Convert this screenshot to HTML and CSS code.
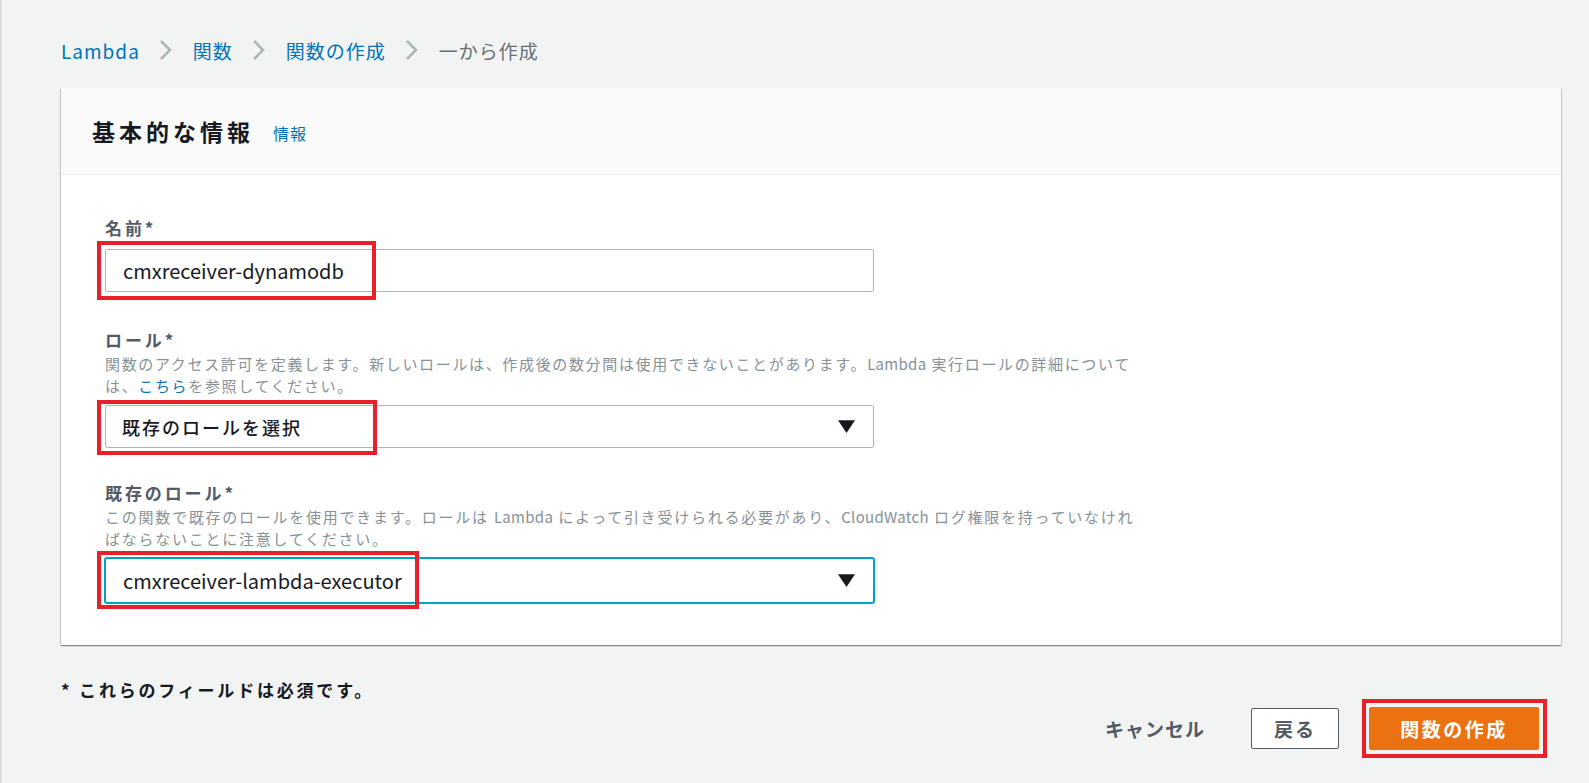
FILE: index.html
```html
<!DOCTYPE html>
<html lang="ja">
<head>
<meta charset="utf-8">
<title>関数の作成</title>
<link rel="stylesheet" href="styles.css">
</head>
<body>
<div class="page">
  <nav class="crumbs">
    <a class="crumb">Lambda</a>
    <svg class="chev" viewBox="0 0 14 22"><polyline points="2,2 11,11 2,20"/></svg>
    <a class="crumb">関数</a>
    <svg class="chev" viewBox="0 0 14 22"><polyline points="2,2 11,11 2,20"/></svg>
    <a class="crumb">関数の作成</a>
    <svg class="chev" viewBox="0 0 14 22"><polyline points="2,2 11,11 2,20"/></svg>
    <span class="crumb current">一から作成</span>
  </nav>

  <section class="card">
    <header class="card-head">
      <h2 class="card-title">基本的な情報</h2>
      <a class="info">情報</a>
    </header>
    <div class="card-body">
      <div class="field">
        <div class="label">名前*</div>
        <div class="control">
          <div class="input"><span class="val">cmxreceiver-dynamodb</span></div>
          <span class="mark mark-name"></span>
        </div>
      </div>

      <div class="field second">
        <div class="label">ロール*</div>
        <p class="desc">関数のアクセス許可を定義します。新しいロールは、作成後の数分間は使用できないことがあります。<span class="en">Lambda</span> 実行ロールの詳細について<br>は、<a class="link">こちら</a>を参照してください。</p>
        <div class="control">
          <div class="input select">
            <span class="val-ja">既存のロールを選択</span>
            <svg class="caret" viewBox="0 0 16 12"><polygon points="0,0 16,0 8,12"/></svg>
          </div>
          <span class="mark mark-role"></span>
        </div>
      </div>

      <div class="field last">
        <div class="label">既存のロール*</div>
        <p class="desc wide">この関数で既存のロールを使用できます。ロールは <span class="en">Lambda</span> によって引き受けられる必要があり、<span class="en">CloudWatch</span> ログ権限を持っていなけれ<br>ばならないことに注意してください。</p>
        <div class="control">
          <div class="input select focus">
            <span class="val">cmxreceiver-lambda-executor</span>
            <svg class="caret" viewBox="0 0 16 12"><polygon points="0,0 16,0 8,12"/></svg>
          </div>
          <span class="mark mark-exist"></span>
        </div>
      </div>
    </div>
  </section>

  <footer class="foot">
    <div class="required">* これらのフィールドは必須です。</div>
    <div class="actions">
      <button class="btn-link">キャンセル</button>
      <button class="btn">戻る</button>
      <div class="control">
        <button class="btn primary">関数の作成</button>
        <span class="mark mark-btn"></span>
      </div>
    </div>
  </footer>
</div>
</body>
</html>
```

FILE: styles.css
```css
* { box-sizing: border-box; }
html, body {
  margin: 0;
  padding: 0;
  width: 1589px;
  height: 783px;
  overflow: hidden;
}
body {
  background: #f2f3f3;
  font-family: "Noto Sans CJK JP", "Noto Sans", sans-serif;
  color: #16191f;
  border-left: 2px solid #d9dddd;
}
.page {
  padding: 30px 28px 0 59px;
}
.crumbs {
  display: flex;
  align-items: center;
  height: 40px;
  font-size: 19px;
  letter-spacing: 1px;
}
.crumb { color: #0073bb; }
.crumb.current { color: #687078; }
.chev {
  width: 14px;
  height: 22px;
  margin: 0 20px 0 19px;
  fill: none;
  stroke: #aab7b8;
  stroke-width: 2.5;
}
.card {
  margin-top: 18px;
  width: 1500px;
  background: #fff;
  box-shadow: 0 1px 1px 0 rgba(0,28,36,.3), 1px 1px 1px 0 rgba(0,28,36,.15), -1px 1px 1px 0 rgba(0,28,36,.15);
}
.card-head {
  display: flex;
  align-items: center;
  height: 87px;
  padding-left: 31px;
  background: #fafafa;
  border-bottom: 1px solid #eaeded;
}
.card-title {
  margin: 0;
  font-size: 23px;
  font-weight: 700;
  letter-spacing: 4px;
  color: #16191f;
}
.info {
  margin-left: 19px;
  font-size: 16px;
  color: #0073bb;
  letter-spacing: 1px;
  padding-top: 3px;
}
.card-body {
  padding: 40px 44px 42px 44px;
}
.field { margin-bottom: 35px; }
.field.second { margin-bottom: 32px; }
.field.last { margin-bottom: 0; }
.label {
  font-size: 17px;
  font-weight: 700;
  color: #545b64;
  line-height: 26px;
  margin-bottom: 8px;
  letter-spacing: 2.9px;
}
.desc {
  margin: -8px 0 8px 0;
  width: 1100px;
  font-size: 15px;
  line-height: 22px;
  color: #879196;
  letter-spacing: 1.65px;
}
.desc.wide { letter-spacing: 1.75px; }
.en { letter-spacing: 0.3px; }
.link { color: #0073bb; }
.control {
  position: relative;
}
.input {
  width: 769px;
  height: 43px;
  border: 1px solid #aab7b8;
  border-radius: 2px;
  background: #fff;
  display: flex;
  align-items: center;
  padding: 0 14px 0 16px;
  color: #16191f;
}
.val {
  font-family: "Noto Sans CJK JP", sans-serif;
  font-size: 20px;
  letter-spacing: 0;
  padding-left: 1px;
}
.val-ja {
  font-size: 18px;
  letter-spacing: 2px;
  font-weight: 500;
}
.select {
  justify-content: space-between;
}
.select.focus {
  height: 45px;
  border: 1px solid #00a1c9;
  box-shadow: 0 0 0 1px #00a1c9;
}
.caret {
  width: 17px;
  height: 13px;
  margin-right: 4px;
  fill: #16191f;
}
.mark {
  position: absolute;
  border: 4px solid #e8202a;
  pointer-events: none;
}
.mark-name { left: -8px; top: -8px; width: 279px; height: 59px; }
.mark-role { left: -8px; top: -5px; width: 280px; height: 55px; }
.mark-exist { left: -8px; top: -7px; width: 322px; height: 58px; }
.mark-btn { left: -7px; top: -8px; width: 185px; height: 59px; }
.foot {
  padding-top: 33px;
}
.required {
  font-size: 17px;
  font-weight: 700;
  line-height: 24px;
  color: #16191f;
  letter-spacing: 2.8px;
}
.actions {
  display: flex;
  justify-content: flex-end;
  align-items: center;
  margin-top: 5px;
  padding-right: 22px;
}
.btn-link {
  border: 0;
  background: none;
  font-family: inherit;
  font-size: 19px;
  font-weight: 700;
  color: #545b64;
  margin-right: 46px;
  letter-spacing: 1px;
  padding: 0;
}
.btn {
  font-family: inherit;
  font-size: 19px;
  font-weight: 700;
  height: 41px;
  width: 88px;
  border: 1px solid #545b64;
  border-radius: 2px;
  background: #fff;
  color: #545b64;
  letter-spacing: 2px;
  margin-right: 30px;
  padding: 0;
}
.btn.primary {
  width: 170px;
  height: 43px;
  margin-right: 0;
  background: #ec7211;
  border-color: #ec7211;
  color: #fff;
  letter-spacing: 2.5px;
}
```
